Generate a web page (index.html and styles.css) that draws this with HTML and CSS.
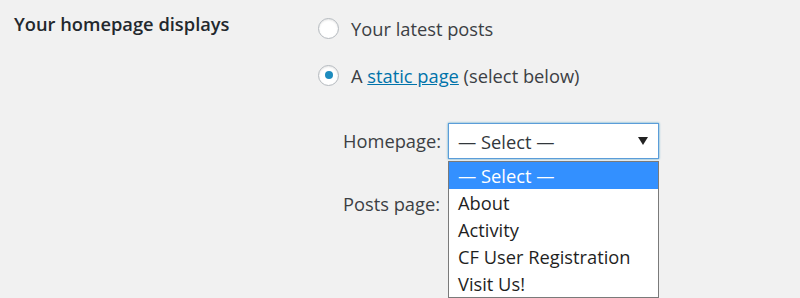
FILE: index.html
```html
<!DOCTYPE html>
<html>
<head>
<meta charset="utf-8">
<link rel="stylesheet" href="styles.css">
</head>
<body>
<div class="row">
  <div class="label">Your homepage displays</div>
  <div class="field">
    <div class="radio-line">
      <span class="radio"></span>
      <span class="rtext">Your latest posts</span>
    </div>
    <div class="radio-line second">
      <span class="radio checked"></span>
      <span class="rtext">A <a class="link">static page</a> (select below)</span>
    </div>
    <div class="sub">
      <div class="sub-line">
        <span class="sub-label">Homepage:</span>
        <div class="select-wrap">
          <div class="select">
            <span>— Select —</span>
            <span class="arrow"></span>
          </div>
          <div class="list">
            <div class="opt active">— Select —</div>
            <div class="opt">About</div>
            <div class="opt">Activity</div>
            <div class="opt">CF User Registration</div>
            <div class="opt">Visit Us!</div>
          </div>
        </div>
      </div>
      <div class="sub-line posts">
        <span class="sub-label">Posts page:</span>
      </div>
    </div>
  </div>
</div>
</body>
</html>
```
FILE: styles.css
```css
html, body {
  margin: 0;
  padding: 0;
  background: #f1f1f1;
  width: 800px;
  height: 298px;
  overflow: hidden;
  font-family: "Open Sans", "Noto Sans", sans-serif;
  color: #23282d;
}
.row {
  display: flex;
  padding: 10px 0 0 14px;
}
.label {
  width: 304px;
  font-size: 18.3px;
  font-weight: 600;
  line-height: 28px;
  color: #23282d;
}
.field {
  display: flex;
  flex-direction: column;
}
.radio-line {
  display: flex;
  align-items: center;
  height: 36px;
  font-size: 18.3px;
  color: #3c3f44;
}
.radio-line.second {
  margin-top: 11px;
}
.radio {
  width: 21px;
  height: 21px;
  border: 1px solid #b4b9be;
  border-radius: 50%;
  background: #fff;
  box-shadow: inset 0 1px 2px rgba(0,0,0,0.1);
  margin-right: 12px;
  position: relative;
  box-sizing: border-box;
}
.radio.checked::after {
  content: "";
  position: absolute;
  left: 5.5px;
  top: 5.5px;
  width: 8px;
  height: 8px;
  border-radius: 50%;
  background: #1e8cbe;
}
.link {
  color: #0073aa;
  text-decoration: underline;
}
.sub {
  padding-left: 25px;
  margin-top: 30px;
}
.sub-line {
  display: flex;
  align-items: flex-start;
  font-size: 18.3px;
  color: #3c3f44;
}
.sub-label {
  line-height: 36px;
  margin-right: 7px;
}
.select-wrap {
  position: relative;
}
.select {
  width: 211px;
  height: 36px;
  box-sizing: border-box;
  border: 1px solid #5b9dd9;
  box-shadow: 0 0 2px rgba(30,140,190,0.8);
  background: #fff;
  display: flex;
  align-items: center;
  justify-content: space-between;
  padding: 0 9px;
  font-size: 18.3px;
  color: #32373c;
}
.arrow {
  width: 0;
  height: 0;
  border-left: 5px solid transparent;
  border-right: 5px solid transparent;
  border-top: 8px solid #222;
  margin-right: 1px;
}
.list {
  position: absolute;
  left: 0;
  top: 38px;
  width: 211px;
  box-sizing: border-box;
  border: 1px solid #7a7a7a;
  background: #fff;
  font-size: 18.3px;
  color: #1f1f1f;
}
.opt {
  height: 27px;
  line-height: 27px;
  padding-left: 9px;
}
.opt.active {
  background: #3390ff;
  color: #fff;
}
.posts {
  margin-top: 27px;
}
```
